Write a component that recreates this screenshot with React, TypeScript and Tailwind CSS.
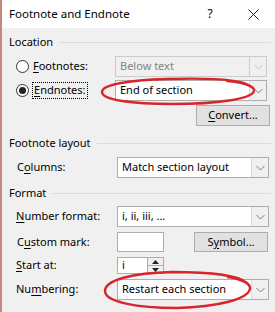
import React from "react";

const Chevron = ({ color = "#7a7a7a" }: { color?: string }) => (
  <svg width="9" height="6" viewBox="0 0 9 6">
    <path d="M0.5 1 L4.5 5 L8.5 1" fill="none" stroke={color} strokeWidth="1" />
  </svg>
);

const Header = ({ label }: { label: string }) => (
  <div className="flex items-center h-[14px] pl-[7px] pr-[4px]">
    <span className="whitespace-nowrap">{label}</span>
    <div className="flex-1 h-px bg-[#dcdcdc] ml-[6px]" />
  </div>
);

const Select = ({
  text,
  disabled = false,
}: {
  text: string;
  disabled?: boolean;
}) => (
  <div
    className={`flex w-[152px] h-[21px] border ${
      disabled ? "border-[#cccccc] bg-[#f0f0f0]" : "border-[#adadad] bg-white"
    }`}
  >
    <div
      className={`flex-1 flex items-center pl-[4px] whitespace-nowrap ${
        disabled ? "text-[#838383]" : "text-black"
      }`}
    >
      {text}
    </div>
    <div
      className={`w-[17px] flex items-center justify-center border-l ${
        disabled ? "border-[#cccccc] bg-[#f0f0f0]" : "border-[#d9d9d9] bg-[#f0f0f0]"
      }`}
    >
      <Chevron color={disabled ? "#c4c4c4" : "#7a7a7a"} />
    </div>
  </div>
);

const Button = ({ children }: { children: React.ReactNode }) => (
  <div className="w-[74px] h-[21px] border border-[#adadad] bg-[#e1e1e1] flex items-center justify-center">
    {children}
  </div>
);

const Radio = ({ checked }: { checked: boolean }) => (
  <div className="w-[13px] h-[13px] rounded-full border border-[#333333] bg-white flex items-center justify-center">
    {checked && <div className="w-[7px] h-[7px] rounded-full bg-[#222222]" />}
  </div>
);

export default function App() {
  return (
    <div
      className="relative w-[275px] h-[312px] bg-[#f0f0f0] border-l-2 border-[#c5897f] text-[11px] text-black overflow-hidden"
      style={{ fontFamily: '"Noto Sans", "Open Sans", sans-serif' }}
    >
      {/* Title bar */}
      <div className="h-[28px] bg-white flex items-center pl-[7px] text-[11.5px]">
        <span className="flex-1">Footnote and Endnote</span>
        <span className="w-[14px] text-center mr-[31px] text-[12px]">?</span>
        <svg width="11" height="11" viewBox="0 0 11 11" className="mr-[16px]">
          <path d="M0.5 0.5 L10.5 10.5 M10.5 0.5 L0.5 10.5" stroke="#222" strokeWidth="1" />
        </svg>
      </div>

      <div className="mt-[7px]">
        <Header label="Location" />
      </div>

      {/* Footnotes */}
      <div className="mt-[7px] flex items-center h-[21px]">
        <div className="ml-[14px]">
          <Radio checked={false} />
        </div>
        <span className="ml-[4px] w-[82px]">
          <u className="underline-offset-2">F</u>ootnotes:
        </span>
        <Select text="Below text" disabled />
      </div>

      {/* Endnotes */}
      <div className="mt-[3px] flex items-center h-[21px]">
        <div className="ml-[14px]">
          <Radio checked />
        </div>
        <div className="ml-[3px] w-[83px]">
          <span className="inline-flex items-center h-[17px] px-[1px] border border-dotted border-black">
            <u className="underline-offset-2">E</u>ndnotes:
          </span>
        </div>
        <Select text="End of section" />
      </div>

      {/* Convert */}
      <div className="mt-[4px] flex justify-end pr-[5px]">
        <Button>
          <span>
            <u className="underline-offset-2">C</u>onvert...
          </span>
        </Button>
      </div>

      <div className="mt-[10px]">
        <Header label="Footnote layout" />
      </div>

      {/* Columns */}
      <div className="mt-[7px] flex items-center h-[21px]">
        <span className="ml-[15px] w-[100px]">
          C<u className="underline-offset-2">o</u>lumns:
        </span>
        <Select text="Match section layout" />
      </div>

      <div className="mt-[8px]">
        <Header label="Format" />
      </div>

      {/* Number format */}
      <div className="mt-[6px] flex items-center h-[21px]">
        <span className="ml-[14px] w-[101px]">
          <u className="underline-offset-2">N</u>umber format:
        </span>
        <Select text="i, ii, iii, ..." />
      </div>

      {/* Custom mark */}
      <div className="mt-[5px] flex items-center h-[20px]">
        <span className="ml-[15px] w-[100px]">
          C<u className="underline-offset-2">u</u>stom mark:
        </span>
        <div className="w-[47px] h-[20px] border border-[#adadad] bg-white" />
        <div className="ml-[30px]">
          <div className="w-[74px] h-[20px] border border-[#adadad] bg-[#e1e1e1] flex items-center justify-center">
            <span>
              S<u className="underline-offset-2">y</u>mbol...
            </span>
          </div>
        </div>
      </div>

      {/* Start at */}
      <div className="mt-[5px] flex items-center h-[17px]">
        <span className="ml-[14px] w-[101px]">
          <u className="underline-offset-2">S</u>tart at:
        </span>
        <div className="flex w-[47px] h-[17px] border border-[#adadad] bg-white">
          <div className="flex-1 flex items-center pl-[4px]">i</div>
          <div className="w-[16px] flex flex-col border-l border-[#adadad]">
            <div className="flex-1 flex items-center justify-center bg-[#f0f0f0] border-b border-[#adadad]">
              <svg width="7" height="4" viewBox="0 0 7 4">
                <path d="M0 4 L3.5 0 L7 4 Z" fill="#222" />
              </svg>
            </div>
            <div className="flex-1 flex items-center justify-center bg-[#f0f0f0]">
              <svg width="7" height="4" viewBox="0 0 7 4">
                <path d="M0 0 L3.5 4 L7 0 Z" fill="#222" />
              </svg>
            </div>
          </div>
        </div>
      </div>

      {/* Numbering */}
      <div className="mt-[5px] flex items-center h-[21px]">
        <span className="ml-[14px] w-[101px]">
          Nu<u className="underline-offset-2">m</u>bering:
        </span>
        <Select text="Restart each section" />
      </div>

      {/* Red annotation ellipses */}
      <svg
        className="absolute left-0 top-0 pointer-events-none"
        width="275"
        height="312"
        viewBox="0 0 275 312"
      >
        <path
          d="M248 86 C 240 79, 200 78, 165 79 C 125 80, 100 85, 100 92 C 100 100, 130 104, 170 104 C 215 104, 250 99, 252 91 C 253 86, 240 82, 225 81"
          fill="none"
          stroke="#d8242b"
          strokeWidth="2.4"
          strokeLinecap="round"
        />
        <path
          d="M245 283 C 235 274, 200 272, 170 272 C 130 273, 103 280, 103 291 C 103 302, 135 308, 175 308 C 215 307, 248 299, 248 288 C 248 283, 238 279, 226 277"
          fill="none"
          stroke="#d8242b"
          strokeWidth="2.4"
          strokeLinecap="round"
        />
      </svg>
    </div>
  );
}
